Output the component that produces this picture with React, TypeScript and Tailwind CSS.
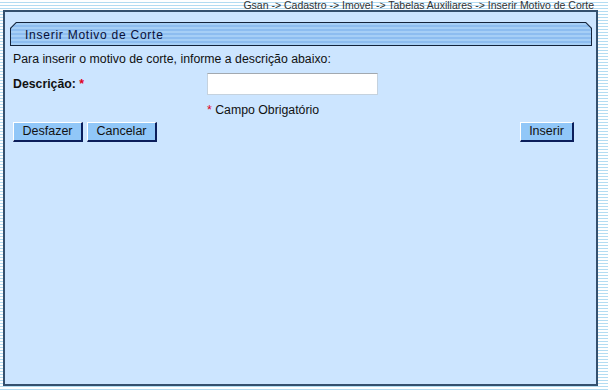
export default function App() {
  const font = { fontFamily: '"Liberation Sans", Arial, sans-serif' };

  return (
    <div
      className="w-[608px] h-[392px] overflow-hidden bg-[image:repeating-linear-gradient(to_bottom,#ffffff_0px,#ffffff_2px,#b3dcf2_2px,#b3dcf2_3px)]"
      style={font}
    >
      {/* breadcrumb */}
      <div className="h-[10px] pr-[14px] text-right text-[10.5px] leading-[10px] text-[#333333] whitespace-nowrap">
        Gsan -&gt; Cadastro -&gt; Imovel -&gt; Tabelas Auxiliares -&gt; Inserir Motivo de Corte
      </div>

      {/* main panel */}
      <div className="ml-[3px] w-[595px] h-[376px] border-2 border-[#34506e] bg-[#cce5ff] pt-[10px] pl-[5px] pr-[4px]">
        {/* title tab */}
        <div className="h-[24px] bg-[#13233a] p-px [clip-path:polygon(6px_0,calc(100%_-_6px)_0,100%_6px,100%_100%,0_100%,0_6px)]">
          <div className="h-full flex items-center pl-[14px] pt-px text-[12px] tracking-[0.75px] text-[#0a1038] bg-[image:repeating-linear-gradient(to_bottom,#a6cff6_0px,#a6cff6_2px,#8dbdf0_2px,#8dbdf0_4px)] [clip-path:polygon(5.5px_0,calc(100%_-_5.5px)_0,100%_5.5px,100%_100%,0_100%,0_5.5px)]">
            Inserir Motivo de Corte
          </div>
        </div>

        <div className="pl-[3px] pr-[18px] text-[12.3px] text-[#111111]">
          <p className="mt-[6px] leading-[14px]">
            Para inserir o motivo de corte, informe a descrição abaixo:
          </p>

          <div className="mt-[7px] flex items-center h-[22px]">
            <div className="w-[194px] font-bold">
              Descrição: <span className="text-[#e0001b]">*</span>
            </div>
            <input
              type="text"
              className="w-[171px] h-[22px] bg-white border border-[#c5d2de] border-t-[#a2a9b0] outline-none"
            />
          </div>

          <div className="mt-[8px] pl-[194px] leading-[14px]">
            <span className="text-[#e0001b]">*</span> Campo Obrigatório
          </div>

          <div className="mt-[5px] flex items-center justify-between">
            <div className="flex gap-[4px]">
              <button className="w-[70px] h-[20px] bg-[#91c7f8] border-t border-l border-white border-r-2 border-b-2 border-r-[#0b1e5b] border-b-[#0b1e5b] text-[12.5px] leading-none">
                Desfazer
              </button>
              <button className="w-[70px] h-[20px] bg-[#91c7f8] border-t border-l border-white border-r-2 border-b-2 border-r-[#0b1e5b] border-b-[#0b1e5b] text-[12.5px] leading-none">
                Cancelar
              </button>
            </div>
            <button className="w-[54px] h-[20px] bg-[#91c7f8] border-t border-l border-white border-r-2 border-b-2 border-r-[#0b1e5b] border-b-[#0b1e5b] text-[12.5px] leading-none">
              Inserir
            </button>
          </div>
        </div>
      </div>
    </div>
  );
}
